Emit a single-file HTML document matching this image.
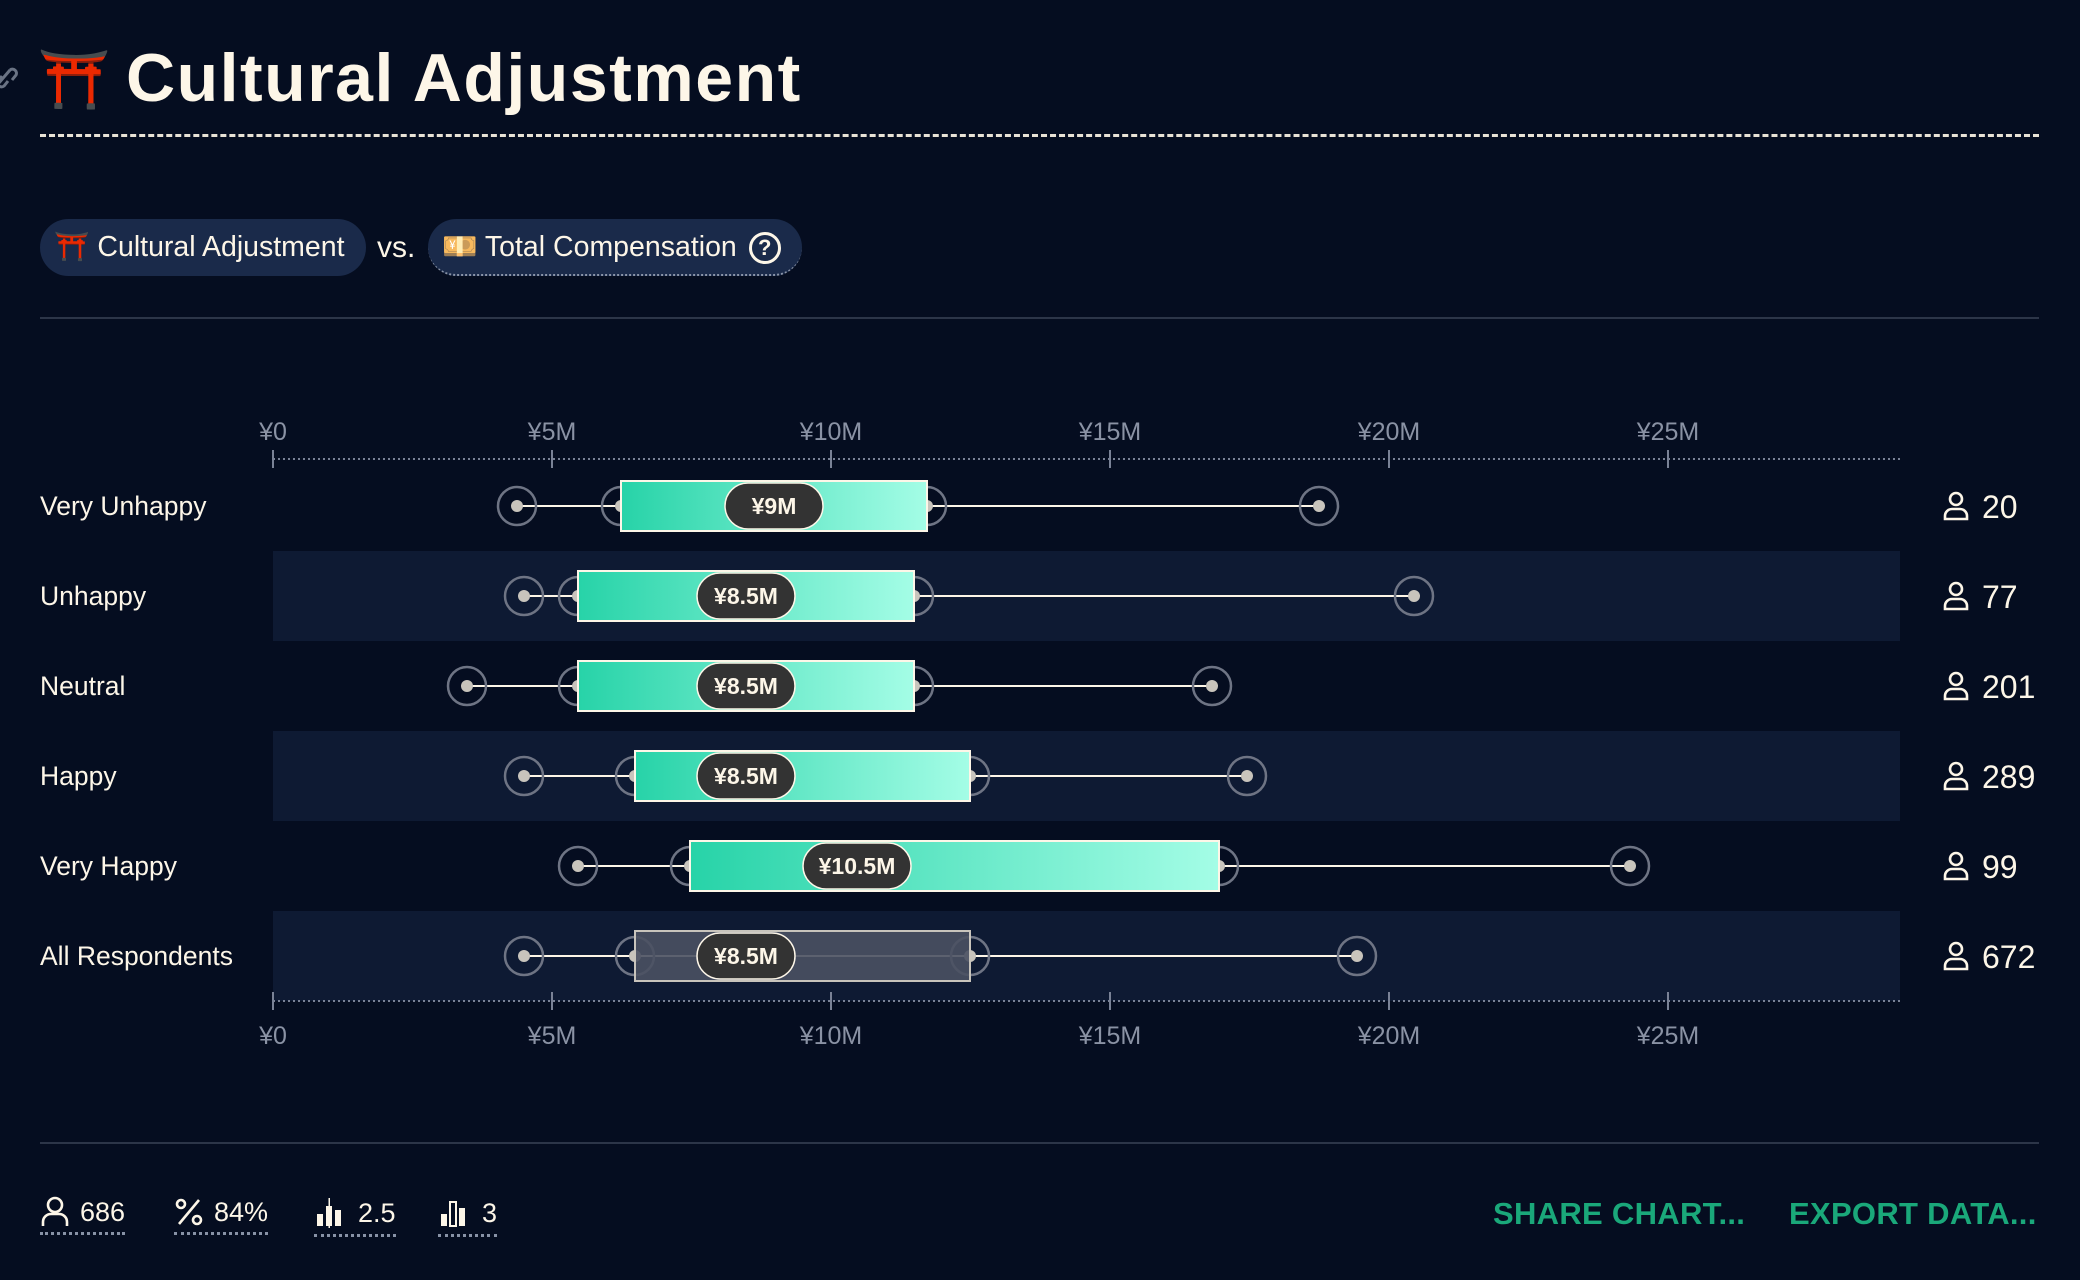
<!DOCTYPE html>
<html><head><meta charset="utf-8"><style>
*{margin:0;padding:0;box-sizing:border-box}
body{width:2080px;height:1280px;background:#050d20;color:#fdf6e8;font-family:"Liberation Sans","Noto Sans CJK JP",sans-serif;position:relative;overflow:hidden}
.abs{position:absolute}
.pill{position:absolute;top:219px;height:57px;border-radius:29px;background:#1a2a4a;font-size:29px;line-height:57px;color:#fdf6e8;white-space:nowrap}
.foot{position:absolute;top:1196px;font-size:27px;display:flex;align-items:center;gap:10px;border-bottom:3px dotted #8892a6;padding-bottom:4px}
.act{position:absolute;top:1196px;font-size:31px;font-weight:bold;color:#1aa87a;letter-spacing:0.3px}
</style></head><body>
<svg class="abs" style="left:-6px;top:62px" width="26" height="30" viewBox="0 0 26 30"><path d="M4 22 L16 8 M8 14 l-4 5 a4 4 0 0 0 6 5 l4-5 M16 8 a4 4 0 0 1 6 5 l-4 5" stroke="#6a7384" stroke-width="3" fill="none"/></svg>
<div class="abs" style="left:38px;top:40px;font-size:58px;line-height:80px">⛩️</div>
<div class="abs" style="left:126px;top:38px;font-size:68px;font-weight:bold;line-height:80px;letter-spacing:1.5px">Cultural Adjustment</div>
<div class="abs" style="left:40px;top:134px;width:1999px;border-top:3px dashed #e8e2d6"></div>
<div class="pill" style="left:40px;width:326px;padding-left:14px;font-size:28.5px">⛩️ Cultural Adjustment</div>
<div class="abs" style="left:377px;top:219px;font-size:30px;line-height:57px">vs.</div>
<div class="pill" style="left:428px;width:374px;padding-left:14px;font-size:28.5px;border-bottom:2px dotted #8a94a8">💴 Total Compensation <span style="display:inline-block;width:32px;height:32px;border:3px solid #fdf6e8;border-radius:50%;font-size:22px;line-height:26px;text-align:center;vertical-align:middle;margin-left:4px;font-weight:bold">?</span></div>
<div class="abs" style="left:40px;top:317px;width:1999px;border-top:2px solid #2c3548"></div>
<div class="abs" style="left:40px;top:1142px;width:1999px;border-top:2px solid #2c3548"></div>

<svg class="abs" style="left:0;top:0" width="2080" height="1280">
<defs>
<linearGradient id="g" x1="0" x2="1"><stop offset="0" stop-color="#27d3a8"/><stop offset="1" stop-color="#a4fde6"/></linearGradient>
</defs>
<g fill="#0e1a33">
<rect x="273" y="551" width="1627" height="90"/>
<rect x="273" y="731" width="1627" height="90"/>
<rect x="273" y="911" width="1627" height="90"/>
</g>
<g stroke="#7a8296" stroke-width="2" stroke-dasharray="2 3"><line x1="273" y1="459" x2="1900" y2="459"/><line x1="273" y1="1001" x2="1900" y2="1001"/></g>
<g stroke="#7a8296" stroke-width="2">
<line x1="273" y1="450" x2="273" y2="468"/><line x1="552" y1="450" x2="552" y2="468"/><line x1="831" y1="450" x2="831" y2="468"/><line x1="1110" y1="450" x2="1110" y2="468"/><line x1="1389" y1="450" x2="1389" y2="468"/><line x1="1668" y1="450" x2="1668" y2="468"/>
<line x1="273" y1="992" x2="273" y2="1010"/><line x1="552" y1="992" x2="552" y2="1010"/><line x1="831" y1="992" x2="831" y2="1010"/><line x1="1110" y1="992" x2="1110" y2="1010"/><line x1="1389" y1="992" x2="1389" y2="1010"/><line x1="1668" y1="992" x2="1668" y2="1010"/>
</g>
<g fill="#8a92a4" font-size="25" text-anchor="middle" font-family="Liberation Sans,sans-serif">
<text x="273" y="440">¥0</text><text x="552" y="440">¥5M</text><text x="831" y="440">¥10M</text><text x="1110" y="440">¥15M</text><text x="1389" y="440">¥20M</text><text x="1668" y="440">¥25M</text>
<text x="273" y="1044">¥0</text><text x="552" y="1044">¥5M</text><text x="831" y="1044">¥10M</text><text x="1110" y="1044">¥15M</text><text x="1389" y="1044">¥20M</text><text x="1668" y="1044">¥25M</text>
</g>
<g font-family="Liberation Sans,sans-serif">
<g>
<line x1="517" y1="506" x2="1319" y2="506" stroke="#fdf6e8" stroke-width="2"/>
<g fill="none" stroke="#6e7484" stroke-width="2.5"><circle cx="517" cy="506" r="19"/><circle cx="621" cy="506" r="19"/><circle cx="927" cy="506" r="19"/><circle cx="1319" cy="506" r="19"/></g>
<g fill="#c8c4bc"><circle cx="517" cy="506" r="6"/><circle cx="621" cy="506" r="6"/><circle cx="927" cy="506" r="6"/><circle cx="1319" cy="506" r="6"/></g>
<rect x="621" y="481" width="306" height="50" fill="url(#g)" stroke="#fdf6e8" stroke-width="2"/>
<rect x="725" y="483" width="98" height="46" rx="23" fill="#333" stroke="#fdf6e8" stroke-width="1.5"/>
<text x="774" y="514" fill="#fdf6e8" font-size="23" font-weight="bold" text-anchor="middle">¥9M</text>
</g>
<g>
<line x1="524" y1="596" x2="1414" y2="596" stroke="#fdf6e8" stroke-width="2"/>
<g fill="none" stroke="#6e7484" stroke-width="2.5"><circle cx="524" cy="596" r="19"/><circle cx="578" cy="596" r="19"/><circle cx="914" cy="596" r="19"/><circle cx="1414" cy="596" r="19"/></g>
<g fill="#c8c4bc"><circle cx="524" cy="596" r="6"/><circle cx="578" cy="596" r="6"/><circle cx="914" cy="596" r="6"/><circle cx="1414" cy="596" r="6"/></g>
<rect x="578" y="571" width="336" height="50" fill="url(#g)" stroke="#fdf6e8" stroke-width="2"/>
<rect x="697" y="573" width="98" height="46" rx="23" fill="#333" stroke="#fdf6e8" stroke-width="1.5"/>
<text x="746" y="604" fill="#fdf6e8" font-size="23" font-weight="bold" text-anchor="middle">¥8.5M</text>
</g>
<g>
<line x1="467" y1="686" x2="1212" y2="686" stroke="#fdf6e8" stroke-width="2"/>
<g fill="none" stroke="#6e7484" stroke-width="2.5"><circle cx="467" cy="686" r="19"/><circle cx="578" cy="686" r="19"/><circle cx="914" cy="686" r="19"/><circle cx="1212" cy="686" r="19"/></g>
<g fill="#c8c4bc"><circle cx="467" cy="686" r="6"/><circle cx="578" cy="686" r="6"/><circle cx="914" cy="686" r="6"/><circle cx="1212" cy="686" r="6"/></g>
<rect x="578" y="661" width="336" height="50" fill="url(#g)" stroke="#fdf6e8" stroke-width="2"/>
<rect x="697" y="663" width="98" height="46" rx="23" fill="#333" stroke="#fdf6e8" stroke-width="1.5"/>
<text x="746" y="694" fill="#fdf6e8" font-size="23" font-weight="bold" text-anchor="middle">¥8.5M</text>
</g>
<g>
<line x1="524" y1="776" x2="1247" y2="776" stroke="#fdf6e8" stroke-width="2"/>
<g fill="none" stroke="#6e7484" stroke-width="2.5"><circle cx="524" cy="776" r="19"/><circle cx="635" cy="776" r="19"/><circle cx="970" cy="776" r="19"/><circle cx="1247" cy="776" r="19"/></g>
<g fill="#c8c4bc"><circle cx="524" cy="776" r="6"/><circle cx="635" cy="776" r="6"/><circle cx="970" cy="776" r="6"/><circle cx="1247" cy="776" r="6"/></g>
<rect x="635" y="751" width="335" height="50" fill="url(#g)" stroke="#fdf6e8" stroke-width="2"/>
<rect x="697" y="753" width="98" height="46" rx="23" fill="#333" stroke="#fdf6e8" stroke-width="1.5"/>
<text x="746" y="784" fill="#fdf6e8" font-size="23" font-weight="bold" text-anchor="middle">¥8.5M</text>
</g>
<g>
<line x1="578" y1="866" x2="1630" y2="866" stroke="#fdf6e8" stroke-width="2"/>
<g fill="none" stroke="#6e7484" stroke-width="2.5"><circle cx="578" cy="866" r="19"/><circle cx="690" cy="866" r="19"/><circle cx="1219" cy="866" r="19"/><circle cx="1630" cy="866" r="19"/></g>
<g fill="#c8c4bc"><circle cx="578" cy="866" r="6"/><circle cx="690" cy="866" r="6"/><circle cx="1219" cy="866" r="6"/><circle cx="1630" cy="866" r="6"/></g>
<rect x="690" y="841" width="529" height="50" fill="url(#g)" stroke="#fdf6e8" stroke-width="2"/>
<rect x="803" y="843" width="108" height="46" rx="23" fill="#333" stroke="#fdf6e8" stroke-width="1.5"/>
<text x="857" y="874" fill="#fdf6e8" font-size="23" font-weight="bold" text-anchor="middle">¥10.5M</text>
</g>
<g>
<line x1="524" y1="956" x2="1357" y2="956" stroke="#fdf6e8" stroke-width="2"/>
<g fill="none" stroke="#6e7484" stroke-width="2.5"><circle cx="524" cy="956" r="19"/><circle cx="635" cy="956" r="19"/><circle cx="970" cy="956" r="19"/><circle cx="1357" cy="956" r="19"/></g>
<g fill="#c8c4bc"><circle cx="524" cy="956" r="6"/><circle cx="635" cy="956" r="6"/><circle cx="970" cy="956" r="6"/><circle cx="1357" cy="956" r="6"/></g>
<rect x="635" y="931" width="335" height="50" fill="#4a5162" fill-opacity="0.9" stroke="#c8c4bc" stroke-width="2"/>
<rect x="697" y="933" width="98" height="46" rx="23" fill="#333" stroke="#fdf6e8" stroke-width="1.5"/>
<text x="746" y="964" fill="#fdf6e8" font-size="23" font-weight="bold" text-anchor="middle">¥8.5M</text>
</g>
</g>
<g fill="#fdf6e8" font-size="26.5" font-family="Liberation Sans,sans-serif">
<text x="40" y="515">Very Unhappy</text><text x="40" y="605">Unhappy</text><text x="40" y="695">Neutral</text><text x="40" y="785">Happy</text><text x="40" y="875">Very Happy</text><text x="40" y="965">All Respondents</text>
</g>
<g fill="#fdf6e8" font-size="32" font-family="Liberation Sans,sans-serif">
<text x="1982" y="518">20</text><text x="1982" y="608">77</text><text x="1982" y="698">201</text><text x="1982" y="788">289</text><text x="1982" y="878">99</text><text x="1982" y="968">672</text>
</g>
<g fill="none" stroke="#fdf6e8" stroke-width="2.6">
<g transform="translate(1956,506)"><circle cx="0" cy="-7" r="6"/><path d="M-11 13 v-3 a7 7 0 0 1 7-7 h8 a7 7 0 0 1 7 7 v3 z"/></g>
<g transform="translate(1956,596)"><circle cx="0" cy="-7" r="6"/><path d="M-11 13 v-3 a7 7 0 0 1 7-7 h8 a7 7 0 0 1 7 7 v3 z"/></g>
<g transform="translate(1956,686)"><circle cx="0" cy="-7" r="6"/><path d="M-11 13 v-3 a7 7 0 0 1 7-7 h8 a7 7 0 0 1 7 7 v3 z"/></g>
<g transform="translate(1956,776)"><circle cx="0" cy="-7" r="6"/><path d="M-11 13 v-3 a7 7 0 0 1 7-7 h8 a7 7 0 0 1 7 7 v3 z"/></g>
<g transform="translate(1956,866)"><circle cx="0" cy="-7" r="6"/><path d="M-11 13 v-3 a7 7 0 0 1 7-7 h8 a7 7 0 0 1 7 7 v3 z"/></g>
<g transform="translate(1956,956)"><circle cx="0" cy="-7" r="6"/><path d="M-11 13 v-3 a7 7 0 0 1 7-7 h8 a7 7 0 0 1 7 7 v3 z"/></g>
</g>
</svg>

<div class="foot" style="left:40px"><svg width="30" height="32" viewBox="0 0 30 32" fill="none" stroke="#fdf6e8" stroke-width="2.6"><circle cx="15" cy="9" r="7"/><path d="M3 30 v-4 a8 8 0 0 1 8-8 h8 a8 8 0 0 1 8 8 v4"/></svg>686</div>
<div class="foot" style="left:174px"><svg width="30" height="32" viewBox="0 0 30 32" fill="none" stroke="#fdf6e8" stroke-width="2.6"><circle cx="7" cy="8" r="4"/><circle cx="23" cy="24" r="4"/><path d="M25 4 L5 28"/></svg>84%</div>
<div class="foot" style="left:314px"><svg width="34" height="34" viewBox="0 0 34 34" fill="#fdf6e8"><rect x="3" y="18" width="6" height="12"/><rect x="12" y="10" width="6" height="20"/><rect x="21" y="14" width="6" height="16"/><rect x="14.5" y="2" width="1.5" height="30"/></svg>2.5</div>
<div class="foot" style="left:438px"><svg width="34" height="34" viewBox="0 0 34 34" fill="#fdf6e8"><rect x="3" y="18" width="6" height="12"/><rect x="12" y="6" width="6" height="24" fill="none" stroke="#fdf6e8" stroke-width="2"/><rect x="21" y="12" width="6" height="18"/></svg>3</div>
<div class="act" style="left:1493px">SHARE CHART...</div>
<div class="act" style="left:1789px">EXPORT DATA...</div>
</body></html>
